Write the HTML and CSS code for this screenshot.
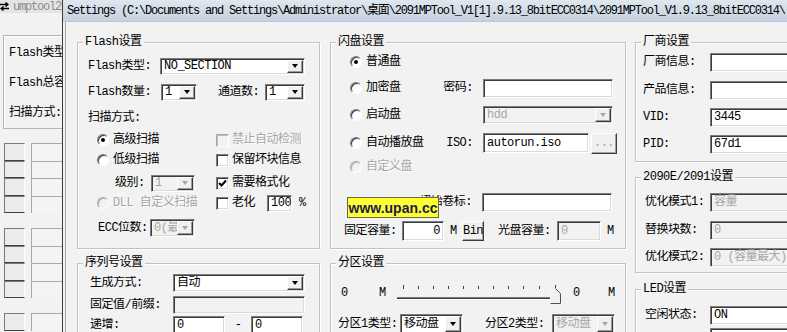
FILE: index.html
```html
<!DOCTYPE html>
<html lang="zh">
<head>
    <meta charset="UTF-8">
    <title>Settings</title>
    <link rel="stylesheet" href="styles.css">
</head>
<body>
<div class="screen">
    <!-- main tool window behind the dialog -->
    <div class="bgwin">
        <div class="bg-title">
            <svg width="9" height="9" viewBox="0 0 9 9"><path d="M0 2.5h8M5.5 0.5l2.5 2-2.5 2M9 6.5H1M3.5 4.5l-2.5 2 2.5 2" fill="none" stroke="#000" stroke-width="1.4"/></svg>
            <span>umptool2</span>
        </div>
        <div class="bg-body">
            <div class="bg-box">
                <div>Flash类型</div>
                <div>Flash总容</div>
                <div>扫描方式:</div>
            </div>
            <div class="bg-set">
                <div class="bg-row"><i class="bg-btn"></i><i class="bg-edit"></i></div>
                <div class="bg-row"><i class="bg-btn"></i><i class="bg-edit"></i></div>
                <div class="bg-row"><i class="bg-btn"></i><i class="bg-edit"></i></div>
                <div class="bg-row"><i class="bg-btn"></i><i class="bg-edit"></i></div>
            </div>
            <div class="bg-set">
                <div class="bg-row"><i class="bg-btn"></i><i class="bg-edit"></i></div>
                <div class="bg-row"><i class="bg-btn"></i><i class="bg-edit"></i></div>
                <div class="bg-row"><i class="bg-btn"></i><i class="bg-edit"></i></div>
                <div class="bg-row"><i class="bg-btn"></i><i class="bg-edit"></i></div>
            </div>
            <div class="bg-set">
                <div class="bg-row"><i class="bg-btn"></i><i class="bg-edit"></i></div>
            </div>
        </div>
    </div>

    <!-- settings dialog -->
    <div class="dlg">
        <div class="dlg-title">Settings (C:\Documents and Settings\Administrator\桌面\2091MPTool_V1[1].9.13_8bitECC0314\2091MPTool_V1.9.13_8bitECC0314\</div>
        <div class="dlg-body">

            <div class="col col1">
                <div class="group g-flash">
                    <span class="gt">Flash设置</span>
                    <div class="row">
                        <span class="w72">Flash类型:</span>
                        <div class="edit combo h17 w145"><span>NO_SECTION</span><i class="arr"></i></div>
                    </div>
                    <div class="row mt6">
                        <span class="w73">Flash数量:</span>
                        <div class="edit combo h17 w36"><span>1</span><i class="arr"></i></div>
                        <span class="w47 ml21">通道数:</span>
                        <div class="edit combo h17 w40"><span>1</span><i class="arr"></i></div>
                    </div>
                    <div class="row mt6">扫描方式:</div>
                    <div class="row mt2">
                        <div class="opt w119 ml9"><i class="radio on"></i>高级扫描</div>
                        <div class="opt dis"><i class="check dis"></i>禁止自动检测</div>
                    </div>
                    <div class="row">
                        <div class="opt w119 ml9"><i class="radio"></i>低级扫描</div>
                        <div class="opt"><i class="check"></i>保留坏块信息</div>
                    </div>
                    <div class="row mt3">
                        <div class="w119 ml9 flexrow">
                            <span class="w36 ml18">级别:</span>
                            <div class="edit combo dis h17 w44"><span>1</span><i class="arr"></i></div>
                        </div>
                        <div class="opt"><i class="check on"><svg width="9" height="9" viewBox="0 0 9 9"><path d="M1 4l2.5 2.5L8 1.5" fill="none" stroke="#000" stroke-width="2"/></svg></i>需要格式化</div>
                    </div>
                    <div class="row">
                        <div class="opt dis w119 ml9"><i class="radio dis"></i>DLL 自定义扫描</div>
                        <div class="opt"><i class="check"></i>老化</div>
                        <div class="edit h17 w25 ml12">100</div>
                        <span class="ml7">%</span>
                    </div>
                    <div class="row mt5">
                        <span class="w52 ml10">ECC位数:</span>
                        <div class="edit combo dis h18 w45"><span>0(最大)</span><i class="arr"></i></div>
                    </div>
                </div>

                <div class="group g-serial">
                    <span class="gt">序列号设置</span>
                    <div class="row">
                        <span class="w83">生成方式:</span>
                        <div class="edit combo h18 w132"><span>自动</span><i class="arr"></i></div>
                    </div>
                    <div class="row mt2">
                        <span class="w83">固定值/前缀:</span>
                        <div class="edit dis h18 w132"></div>
                    </div>
                    <div class="row">
                        <span class="w83">递增:</span>
                        <div class="edit h18 w52">0</div>
                        <span class="dash">-</span>
                        <div class="edit h18 w52">0</div>
                    </div>
                </div>
            </div>

            <div class="col col2">
                <div class="group g-disk">
                    <span class="gt">闪盘设置</span>
                    <div class="row">
                        <div class="opt w91"><i class="radio on"></i>普通盘</div>
                    </div>
                    <div class="row mt6">
                        <div class="opt w91"><i class="radio"></i>加密盘</div>
                        <span class="rlbl w42">密码:</span>
                        <div class="edit w130"></div>
                    </div>
                    <div class="row mt7">
                        <div class="opt w91"><i class="radio"></i>启动盘</div>
                        <span class="w42"></span>
                        <div class="edit combo dis h18 w130"><span>hdd</span><i class="arr"></i></div>
                    </div>
                    <div class="row mt8">
                        <div class="opt w91"><i class="radio"></i>自动播放盘</div>
                        <span class="rlbl w42">ISO:</span>
                        <div class="edit h20 w106">autorun.iso</div>
                        <div class="btn dis h21 w26 ml2">...</div>
                    </div>
                    <div class="row mt4">
                        <div class="opt dis"><i class="radio dis"></i>自定义盘</div>
                    </div>
                    <div class="row mt15">
                        <span class="rlbl w132">初始卷标:</span>
                        <div class="edit w130"></div>
                    </div>
                    <div class="row mt9 mln6">
                        <span class="w58">固定容量:</span>
                        <div class="edit right h20 w42">0</div>
                        <span class="w12 ml6">M</span>
                        <div class="btn h20 w22">Bin</div>
                        <span class="w59 ml14">光盘容量:</span>
                        <div class="edit dis h20 w44">0</div>
                        <span class="ml6">M</span>
                    </div>
                    <div class="mark">www.upan.cc</div>
                </div>

                <div class="group g-part">
                    <span class="gt">分区设置</span>
                    <div class="row ml3">
                        <span class="w38">0</span>
                        <span class="w18">M</span>
                        <svg class="slider" width="165" height="24" viewBox="0 0 165 24">
                            <g stroke="#404040" stroke-width="1">
                                <path d="M6.5 4v4M21.5 5v3M36.5 5v3M51.5 5v3M66.5 5v3M81.5 5v3M96.5 5v3M111.5 5v3M126.5 5v3M142.5 5v3M158.5 4v4"/>
                            </g>
                            <path d="M0 16.5h153" stroke="#7a7a7a"/>
                            <path d="M0 17.5h153" stroke="#404040"/>
                            <path d="M1 18.5h152" stroke="#fff"/>
                            <path d="M153.5 22.5V12.5l5-5 5 5v10z" fill="#f0f0f0" stroke="#fff"/>
                            <path d="M158.5 7.5l5 5v10h-10" fill="none" stroke="#505050"/>
                        </svg>
                        <span class="w35 ml11">0</span>
                        <span>M</span>
                    </div>
                    <div class="row mt11">
                        <span class="w62">分区1类型:</span>
                        <div class="edit combo h20 w63"><span>移动盘</span><i class="arr"></i></div>
                        <span class="w67 ml22">分区2类型:</span>
                        <div class="edit combo dis h20 w63"><span>移动盘</span><i class="arr"></i></div>
                    </div>
                </div>
            </div>

            <div class="col col3">
                <div class="group g-vendor">
                    <span class="gt">厂商设置</span>
                    <div class="row"><span class="w67">厂商信息:</span><div class="edit w120"></div></div>
                    <div class="row mt8"><span class="w67">产品信息:</span><div class="edit w120"></div></div>
                    <div class="row mt7"><span class="w67">VID:</span><div class="edit w120">3445</div></div>
                    <div class="row mt7"><span class="w67">PID:</span><div class="edit w120">67d1</div></div>
                </div>

                <div class="group g-opt">
                    <span class="gt">2090E/2091设置</span>
                    <div class="row"><span class="w65">优化模式1:</span><div class="edit dis w120">容量</div></div>
                    <div class="row mt8"><span class="w65">替换块数:</span><div class="edit dis w120">0</div></div>
                    <div class="row mt7"><span class="w65">优化模式2:</span><div class="edit dis w120">0 (容量最大)</div></div>
                </div>

                <div class="group g-led">
                    <span class="gt">LED设置</span>
                    <div class="row"><span class="w65">空闲状态:</span><div class="edit w120">ON</div></div>
                    <div class="row mt2"><span class="w65"></span><div class="edit w120"></div></div>
                </div>
            </div>

        </div>
    </div>
</div>
</body>
</html>
```

FILE: styles.css
```css
* { box-sizing: border-box; }
html, body { margin: 0; }
body { width: 787px; height: 332px; overflow: hidden; background: #f2f2f2; color: #000; font: 12px/14px "Liberation Mono", "Noto Sans CJK SC", monospace; letter-spacing: -0.5px; }
.screen { display: flex; height: 332px; }

/* window behind */
.bgwin { width: 62px; flex: none; overflow: hidden; }
.bg-title { height: 13px; display: flex; align-items: center; gap: 4px; background: #e4e4e4; color: #8c8c8c; white-space: nowrap; letter-spacing: -1.2px; }
.bg-body { padding: 22px 0 0 3px; }
.bg-box { height: 94px; border: 1px solid #b4b4b4; border-right: none; box-shadow: inset 1px 1px 0 #fff; padding: 10px 0 0 5px; display: flex; flex-direction: column; gap: 16px; white-space: nowrap; overflow: hidden; }
.bg-set { margin-top: 14px; }
.bg-set + .bg-set { margin-top: 15px; }
.bg-row { display: flex; height: 18px; }
.bg-row:nth-child(even) { height: 17px; }
.bg-btn { width: 21px; margin-left: 1px; border: 1px solid; border-color: #7a7a7a #fff #404040 #7a7a7a; background: #ececec; }
.bg-edit { flex: 1; margin-left: 6px; border-top: 1px solid #a8a8a8; border-left: 1px solid #a8a8a8; background: #f4f4f4; }

/* dialog */
.dlg { flex: 1; min-width: 0; border-left: 1px solid #3c3c3c; display: flex; flex-direction: column; }
.dlg-title { height: 22px; flex: none; padding-left: 4px; line-height: 23px; background: linear-gradient(#dfe7ef, #c4d2df); border-bottom: 1px solid #b9c6d3; white-space: nowrap; overflow: hidden; letter-spacing: -1.2px; }
.dlg-body { flex: 1; display: flex; margin-left: 2px; border-left: 1px solid #a4a4a4; padding: 20px 0 0 11px; overflow: hidden; }
.col { flex: none; display: flex; flex-direction: column; }
.col1 { width: 243px; margin-right: 10px; }
.col2 { width: 296px; margin-right: 9px; }
.col3 { width: 200px; }

.group { position: relative; flex: none; border: 1px solid #c2c2c2; box-shadow: inset 1px 1px 0 #fff, 1px 1px 0 #fff; }
.gt { position: absolute; top: -9px; left: 5px; padding: 0 2px; line-height: 16px; background: #f2f2f2; white-space: nowrap; }

.g-flash { height: 207px; padding: 13px 0 0 10px; }
.g-serial { height: 90px; margin-top: 14px; padding: 9px 0 0 12px; }
.g-disk { height: 207px; padding: 9px 0 0 19px; }
.g-part { height: 90px; margin-top: 14px; padding: 19px 0 0 7px; }
.g-vendor { height: 120px; padding: 9px 0 0 7px; }
.g-opt { height: 96px; margin-top: 15px; padding: 14px 0 0 9px; }
.g-led { height: 60px; margin-top: 16px; padding: 15px 0 0 9px; }

.row { display: flex; align-items: center; height: 20px; white-space: nowrap; }
.flexrow { display: flex; align-items: center; }
.rlbl { text-align: right; padding-right: 10px; }

/* controls */
.edit { flex: none; display: flex; align-items: center; height: 19px; padding: 0 3px; overflow: hidden; white-space: nowrap; background: #fff; border: 1px solid; border-color: #7c7c7c #fff #fff #7c7c7c; box-shadow: inset 1px 1px 0 #3c3c3c, inset -1px -1px 0 #dadada; }
.edit.dis { background: #f2f2f2; color: #a6a6a6; }
.edit.right { justify-content: flex-end; }
.combo { padding-right: 1px; }
.combo span { flex: 1; overflow: hidden; }
.arr { flex: none; width: 16px; height: calc(100% - 2px); display: flex; align-items: center; justify-content: center; background: #f0f0f0; border: 1px solid; border-color: #fff #3c3c3c #3c3c3c #fff; box-shadow: inset -1px -1px 0 #9a9a9a; }
.arr::after { content: ""; border-left: 3.5px solid transparent; border-right: 3.5px solid transparent; border-top: 4px solid #000; }
.dis .arr::after { border-top-color: #a6a6a6; }

.btn { flex: none; display: flex; align-items: center; justify-content: center; background: #f0f0f0; border: 1px solid; border-color: #fff #3c3c3c #3c3c3c #fff; box-shadow: inset -1px -1px 0 #a0a0a0; }
.btn.dis { color: #a6a6a6; }

.opt { display: flex; align-items: center; }
.opt.dis { color: #a6a6a6; text-shadow: 1px 1px 0 #fff; }
.radio { flex: none; position: relative; width: 12px; height: 12px; margin-right: 4px; border-radius: 50%; background: #fff; border: 1px solid; border-color: #7c7c7c #fff #fff #7c7c7c; box-shadow: inset 1px 1px 0 #3c3c3c; }
.radio.on::after { content: ""; position: absolute; left: 3px; top: 3px; width: 4px; height: 4px; border-radius: 50%; background: #000; }
.radio.dis { background: #f2f2f2; border-color: #a8a8a8 #fff #fff #a8a8a8; box-shadow: inset 1px 1px 0 #b8b8b8; }
.check { flex: none; display: flex; align-items: center; justify-content: center; width: 13px; height: 13px; margin-right: 3px; background: #fff; border: 1px solid; border-color: #7c7c7c #fff #fff #7c7c7c; box-shadow: inset 1px 1px 0 #3c3c3c, inset -1px -1px 0 #dadada; }
.check.dis { background: #f2f2f2; border-color: #a8a8a8 #fff #fff #a8a8a8; box-shadow: inset 1px 1px 0 #bcbcbc; }

.slider { flex: none; }
.dash { width: 26px; text-align: center; }

.mark { position: absolute; left: 16px; top: 154px; width: 92px; height: 21px; display: flex; align-items: center; justify-content: center; background: #ffff33; border: 1px solid #6a6a40; color: #1b1b4a; font: bold 14px/1 "Liberation Sans", Arial, sans-serif; letter-spacing: 0; }

/* sizes */
.h17 { height: 17px; }
.h18 { height: 18px; }
.h20 { height: 20px; }
.h21 { height: 21px; }
.w12 { width: 12px; } .w18 { width: 18px; } .w22 { width: 22px; } .w25 { width: 25px; } .w26 { width: 26px; }
.w35 { width: 35px; } .w36 { width: 36px; } .w38 { width: 38px; } .w40 { width: 40px; }
.w42 { width: 42px; } .w44 { width: 44px; } .w45 { width: 45px; } .w47 { width: 47px; } .w52 { width: 52px; }
.w58 { width: 58px; } .w59 { width: 59px; } .w62 { width: 62px; } .w63 { width: 63px; } .w65 { width: 65px; }
.w67 { width: 67px; } .w72 { width: 72px; } .w73 { width: 73px; } .w83 { width: 83px; } .w91 { width: 91px; }
.w106 { width: 106px; } .w119 { width: 119px; } .w120 { width: 120px; } .w130 { width: 130px; } .w132 { width: 132px; } .w145 { width: 145px; }
span[class^="w"], span[class*=" w"] { flex: none; overflow: hidden; }

.mt2 { margin-top: 2px; } .mt3 { margin-top: 3px; } .mt4 { margin-top: 4px; } .mt5 { margin-top: 5px; } .mt6 { margin-top: 6px; }
.mt7 { margin-top: 7px; } .mt8 { margin-top: 8px; } .mt9 { margin-top: 9px; } .mt11 { margin-top: 11px; }
.mt15 { margin-top: 15px; }
.ml2 { margin-left: 2px; } .ml3 { margin-left: 3px; } .ml6 { margin-left: 6px; } .ml7 { margin-left: 7px; }
.ml9 { margin-left: 9px; } .ml10 { margin-left: 10px; } .ml11 { margin-left: 11px; } .ml12 { margin-left: 12px; }
.ml14 { margin-left: 14px; } .ml18 { margin-left: 18px; } .ml21 { margin-left: 21px; } .ml22 { margin-left: 22px; }
.mln6 { margin-left: -6px; }
```
